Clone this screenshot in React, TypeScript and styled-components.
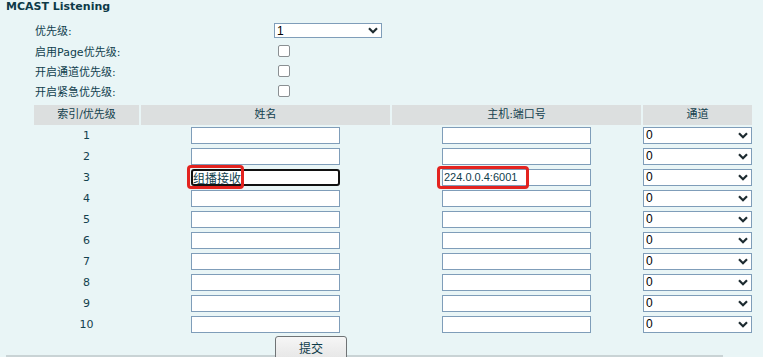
import React from 'react';
import styled, { createGlobalStyle } from 'styled-components';

const GlobalStyle = createGlobalStyle`
    html, body {
        margin: 0;
        padding: 0;
        background: #e9f5f6;
    }
    body {
        font-family: "DejaVu Sans", "Noto Sans CJK SC", sans-serif;
        font-size: 11px;
        color: #10404d;
    }
`;

const Page = styled.div`
    width: 763px;
    height: 357px;
    overflow: hidden;
`;

const Section = styled.div`
    width: 717px;
    margin-left: 6px;
    border-bottom: 2px solid #c9d3d5;
`;

const Title = styled.div`
    height: 20px;
    line-height: 14px;
    font-size: 11px;
    font-weight: bold;
    color: #0d3a48;
`;

const FormGrid = styled.div`
    display: grid;
    grid-template-columns: 239px 120px;
    grid-auto-rows: 20.4px;
    padding-left: 29px;
    align-items: center;
`;

const Label = styled.div`
    font-size: 11px;
`;

const SelectWrap = styled.div<{ $width: number; $height: number }>`
    position: relative;
    width: ${(p) => p.$width}px;
    height: ${(p) => p.$height}px;
`;

const Select = styled.select`
    appearance: none;
    width: 100%;
    height: 100%;
    box-sizing: border-box;
    border: 1px solid #7f9db9;
    background: #fff;
    border-radius: 0;
    padding: 0 0 0 2px;
    font-family: "Liberation Sans", Arial, sans-serif;
    font-size: 12px;
    color: #000;
    outline: none;
`;

const Chevron = styled.svg`
    position: absolute;
    right: 4px;
    top: 50%;
    width: 10px;
    height: 7px;
    margin-top: -3px;
    pointer-events: none;
`;

const Check = styled.span`
    display: block;
    width: 10px;
    height: 10px;
    margin-left: 4px;
    border: 1px solid #8a8f92;
    border-radius: 2px;
    background: #fff;
`;

const Table = styled.div`
    display: grid;
    grid-template-columns: 105px 249px 249px 109px;
    column-gap: 2px;
    margin-top: 3px;
    margin-left: 28px;
    width: 718px;
`;

const HeadCell = styled.div`
    height: 20px;
    line-height: 20px;
    background: #dcdfdf;
    text-align: center;
    font-size: 11px;
    color: #13414e;
`;

const Cell = styled.div<{ $align?: 'center' | 'left' }>`
    position: relative;
    height: 21px;
    display: flex;
    align-items: center;
    justify-content: ${(p) => (p.$align === 'left' ? 'flex-start' : 'center')};
`;

const Num = styled.span`
    font-size: 11px;
    color: #13414e;
`;

const TextInput = styled.input<{ $focused?: boolean }>`
    width: 149px;
    height: 17px;
    box-sizing: border-box;
    border: ${(p) => (p.$focused ? '2px solid #111' : '1px solid #7f9db9')};
    border-radius: ${(p) => (p.$focused ? '3px' : '0')};
    background: #fff;
    padding: 0 0 0 ${(p) => (p.$focused ? '0' : '1px')};
    font-family: "Liberation Sans", "Noto Sans CJK SC", sans-serif;
    font-size: ${(p) => (p.$focused ? '12px' : '11px')};
    color: #10404d;
    outline: none;
`;

const Mark = styled.div<{ $left: number; $top: number; $w: number; $h: number }>`
    position: absolute;
    left: ${(p) => p.$left}px;
    top: ${(p) => p.$top}px;
    width: ${(p) => p.$w}px;
    height: ${(p) => p.$h}px;
    box-sizing: border-box;
    border: 3px solid #e3231f;
    border-radius: 4px;
    pointer-events: none;
`;

const ButtonRow = styled.div`
    height: 19px;
    padding-left: 269px;
    padding-top: 1px;
`;

const Button = styled.button`
    width: 72px;
    height: 24px;
    box-sizing: border-box;
    border: 1px solid #6f7375;
    border-radius: 3px;
    background: linear-gradient(#f6f6f6, #e6e6e6);
    font-family: "Noto Sans CJK SC", sans-serif;
    font-size: 12px;
    color: #0d3a48;
    padding: 0;
    line-height: 20px;
`;

function Dropdown({ value, width, height }: { value: string; width: number; height: number }): JSX.Element {
    return (
        <SelectWrap $width={width} $height={height}>
            <Select defaultValue={value}>
                <option value={value}>{value}</option>
            </Select>
            <Chevron viewBox="0 0 10 7">
                <path d="M1 1.2 L5 5.2 L9 1.2" fill="none" stroke="#1d2b30" strokeWidth="2.2" />
            </Chevron>
        </SelectWrap>
    );
}

const rows = [1, 2, 3, 4, 5, 6, 7, 8, 9, 10];

function App(): JSX.Element {
    return (
        <Page>
            <GlobalStyle />
            <Section>
                <Title>MCAST Listening</Title>
                <FormGrid>
                    <Label>优先级:</Label>
                    <Dropdown value="1" width={108} height={15} />
                    <Label>启用Page优先级:</Label>
                    <Check />
                    <Label>开启通道优先级:</Label>
                    <Check />
                    <Label>开启紧急优先级:</Label>
                    <Check />
                </FormGrid>
                <Table>
                    <HeadCell>索引/优先级</HeadCell>
                    <HeadCell>姓名</HeadCell>
                    <HeadCell>主机:端口号</HeadCell>
                    <HeadCell>通道</HeadCell>
                    {rows.map((n) => (
                        <React.Fragment key={n}>
                            <Cell>
                                <Num>{n}</Num>
                            </Cell>
                            <Cell>
                                <TextInput
                                    $focused={n === 3}
                                    defaultValue={n === 3 ? '组播接收' : ''}
                                />
                                {n === 3 && <Mark $left={46} $top={-2} $w={57} $h={24} />}
                            </Cell>
                            <Cell>
                                <TextInput defaultValue={n === 3 ? '224.0.0.4:6001' : ''} />
                                {n === 3 && <Mark $left={45} $top={-1} $w={92} $h={23} />}
                            </Cell>
                            <Cell $align="left">
                                <Dropdown value="0" width={109} height={17} />
                            </Cell>
                        </React.Fragment>
                    ))}
                </Table>
                <ButtonRow>
                    <Button>提交</Button>
                </ButtonRow>
            </Section>
        </Page>
    );
}

export default App;
